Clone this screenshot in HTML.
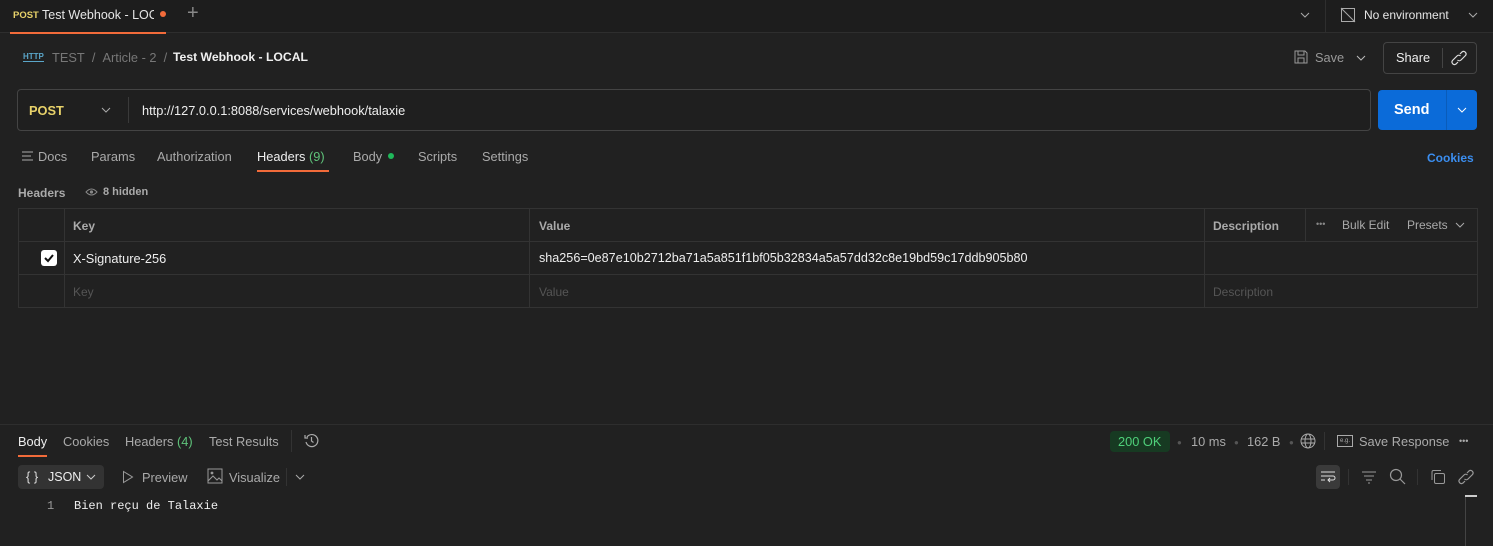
<!DOCTYPE html>
<html><head><style>
*{margin:0;padding:0;box-sizing:border-box}
body{width:1493px;height:546px;background:#212121;font-family:"Liberation Sans",sans-serif;font-size:12.8px;color:#c8c8c8;position:relative;overflow:hidden}
.a{position:absolute;white-space:nowrap}
.b{font-weight:bold}
svg{position:absolute}
</style></head><body>
<div class="a" style="left:0;top:0;width:1493px;height:33px;background:#1d1d1d;border-bottom:1px solid #2e2e2e"></div>
<div class="a" style="left:10px;top:32px;width:156px;height:2px;background:#f26b3a"></div>
<div class="a b" style="left:13px;top:10px;font-size:9.5px;color:#e8d26a">POST</div>
<div class="a" style="left:42px;top:8px;color:#e6e6e6;font-size:12.5px;width:112px;overflow:hidden">Test Webhook - LOCAL</div>
<div class="a" style="left:160px;top:11px;width:6px;height:6px;border-radius:3px;background:#f26b3a"></div>
<div class="a" style="left:187px;top:2px;font-size:20px;color:#888">+</div>
<svg style="left:1299px;top:10px" width="12" height="10"><path d="M2 3l4 4 4-4" stroke="#aaa" fill="none"/></svg>
<div class="a" style="left:1325px;top:0;width:1px;height:33px;background:#2e2e2e"></div>
<svg style="left:1340px;top:7px" width="16" height="16"><rect x="1.5" y="1.5" width="13" height="13" fill="none" stroke="#aaa"/><path d="M1 1l14 14" stroke="#aaa"/></svg>
<div class="a" style="left:1364px;top:8px;color:#e6e6e6;font-size:12px">No environment</div>
<svg style="left:1467px;top:10px" width="12" height="10"><path d="M2 3l4 4 4-4" stroke="#aaa" fill="none"/></svg>
<div class="a b" style="left:23px;top:52px;font-size:8px;color:#5aa6c9;border-bottom:1px solid #5aa6c9">HTTP</div>
<div class="a" style="left:52px;top:50px;color:#777">TEST&nbsp; / &nbsp;Article - 2&nbsp; / </div>
<div class="a b" style="left:173px;top:50px;color:#f0f0f0;font-size:12.2px">Test Webhook - LOCAL</div>
<svg style="left:1293px;top:49px" width="16" height="16"><path d="M2 2h10l2 2v10H2z M5 2v4h6V2 M5 14v-5h6v5" fill="none" stroke="#999"/></svg>
<div class="a" style="left:1315px;top:50px;color:#999">Save</div>
<svg style="left:1355px;top:53px" width="12" height="10"><path d="M2 3l4 4 4-4" stroke="#bbb" fill="none"/></svg>
<div class="a" style="left:1383px;top:42px;width:94px;height:32px;border:1px solid #444;border-radius:4px"></div>
<div class="a" style="left:1396px;top:50px;color:#eee">Share</div>
<div class="a" style="left:1442px;top:48px;width:1px;height:20px;background:#444"></div>
<svg style="left:1451px;top:50px" width="16" height="16"><path d="M9 4l2-2a2.5 2.5 0 013.5 3.5L10 10a2.5 2.5 0 01-3.5 0M7 12l-2 2a2.5 2.5 0 01-3.5-3.5L6 6a2.5 2.5 0 013.5 0" fill="none" stroke="#ddd" stroke-width="1.2"/></svg>
<div class="a" style="left:17px;top:89px;width:1354px;height:42px;border:1px solid #444;border-radius:4px;background:#1f1f1f"></div>
<div class="a b" style="left:29px;top:103px;color:#e8d26a">POST</div>
<svg style="left:100px;top:105px" width="12" height="10"><path d="M2 3l4 4 4-4" stroke="#aaa" fill="none"/></svg>
<div class="a" style="left:128px;top:97px;width:1px;height:26px;background:#3a3a3a"></div>
<div class="a" style="left:142px;top:103px;color:#eee">http://127.0.0.1:8088/services/webhook/talaxie</div>
<div class="a" style="left:1378px;top:90px;width:99px;height:40px;background:#0b6bd9;border-radius:4px"></div>
<div class="a" style="left:1446px;top:90px;width:1px;height:40px;background:#0a5cba"></div>
<div class="a b" style="left:1394px;top:102px;color:#fff;font-size:14.5px">Send</div>
<svg style="left:1456px;top:105px" width="12" height="10"><path d="M2 3l4 4 4-4" stroke="#fff" fill="none"/></svg>
<svg style="left:22px;top:150px" width="12" height="12"><path d="M0 2h11M0 6h9M0 10h11" stroke="#aaa"/></svg>
<div class="a" style="left:38px;top:149px;color:#aaa">Docs</div>
<div class="a" style="left:91px;top:149px;color:#aaa">Params</div>
<div class="a" style="left:157px;top:149px;color:#aaa">Authorization</div>
<div class="a" style="left:257px;top:149px;color:#eee">Headers <span style="color:#5fc37a">(9)</span></div>
<div class="a" style="left:257px;top:170px;width:72px;height:2px;background:#f26b3a"></div>
<div class="a" style="left:353px;top:149px;color:#aaa">Body</div>
<div class="a" style="left:388px;top:153px;width:6px;height:6px;border-radius:3px;background:#1fb85a"></div>
<div class="a" style="left:418px;top:149px;color:#aaa">Scripts</div>
<div class="a" style="left:482px;top:149px;color:#aaa">Settings</div>
<div class="a b" style="left:1427px;top:151px;color:#3b8ef0;font-size:12px">Cookies</div>
<div class="a b" style="left:18px;top:186px;color:#aaa;font-size:12px">Headers</div>
<svg style="left:85px;top:187px" width="13" height="10"><path d="M1 5q5.5-6 11 0q-5.5 6-11 0z" fill="none" stroke="#888"/><circle cx="6.5" cy="5" r="1.6" fill="#888"/></svg>
<div class="a b" style="left:103px;top:186px;color:#aaa;font-size:11px">8 hidden</div>
<div class="a" style="left:18px;top:208px;width:1460px;height:100px;border:1px solid #333"></div>
<div class="a" style="left:18px;top:241px;width:1460px;height:1px;background:#333"></div>
<div class="a" style="left:18px;top:274px;width:1460px;height:1px;background:#333"></div>
<div class="a" style="left:64px;top:208px;width:1px;height:100px;background:#333"></div>
<div class="a" style="left:529px;top:208px;width:1px;height:100px;background:#333"></div>
<div class="a" style="left:1204px;top:208px;width:1px;height:100px;background:#333"></div>
<div class="a" style="left:1305px;top:208px;width:1px;height:34px;background:#333"></div>
<div class="a b" style="left:73px;top:219px;color:#aaa;font-size:12px">Key</div>
<div class="a b" style="left:539px;top:219px;color:#aaa;font-size:12px">Value</div>
<div class="a b" style="left:1213px;top:219px;color:#aaa;font-size:12px">Description</div>
<div class="a" style="left:1316px;top:219px;color:#888;font-size:9px">•••</div>
<div class="a" style="left:1342px;top:218px;color:#aaa;font-size:12px">Bulk Edit</div>
<div class="a" style="left:1407px;top:218px;color:#aaa;font-size:12px">Presets</div>
<svg style="left:1454px;top:220px" width="12" height="10"><path d="M2 3l4 4 4-4" stroke="#aaa" fill="none"/></svg>
<div class="a" style="left:41px;top:250px;width:16px;height:16px;background:#fff;border-radius:3px"></div>
<svg style="left:41px;top:250px" width="16" height="16"><path d="M4 8l3 3 5-6" stroke="#111" stroke-width="2" fill="none"/></svg>
<div class="a" style="left:73px;top:251px;color:#eee">X-Signature-256</div>
<div class="a" style="left:539px;top:251px;color:#eee;font-size:12.6px">sha256=0e87e10b2712ba71a5a851f1bf05b32834a5a57dd32c8e19bd59c17ddb905b80</div>
<div class="a" style="left:73px;top:285px;color:#555;font-size:12px">Key</div>
<div class="a" style="left:539px;top:285px;color:#555;font-size:12px">Value</div>
<div class="a" style="left:1213px;top:285px;color:#555;font-size:12px">Description</div>
<div class="a" style="left:0;top:424px;width:1493px;height:1px;background:#2e2e2e"></div>
<div class="a" style="left:18px;top:434px;color:#eee">Body</div>
<div class="a" style="left:18px;top:455px;width:29px;height:2px;background:#f26b3a"></div>
<div class="a" style="left:63px;top:434px;color:#aaa">Cookies</div>
<div class="a" style="left:125px;top:434px;color:#aaa">Headers <span style="color:#5fc37a">(4)</span></div>
<div class="a" style="left:209px;top:434px;color:#aaa">Test Results</div>
<div class="a" style="left:291px;top:430px;width:1px;height:22px;background:#333"></div>
<svg style="left:304px;top:433px" width="15" height="15"><path d="M3 4a6 6 0 11-1 5" fill="none" stroke="#aaa" stroke-width="1.2"/><path d="M1 2v3h3M7.5 4v4l2 1.5" fill="none" stroke="#aaa" stroke-width="1.2"/></svg>
<div class="a" style="left:1110px;top:431px;width:60px;height:21px;background:#173a22;border-radius:4px"></div>
<div class="a" style="left:1118px;top:434px;color:#4fd07a">200 OK</div>
<div class="a" style="left:1177px;top:438px;color:#555;font-size:8px">●</div>
<div class="a" style="left:1191px;top:434px;color:#aaa">10 ms</div>
<div class="a" style="left:1234px;top:438px;color:#555;font-size:8px">●</div>
<div class="a" style="left:1247px;top:434px;color:#aaa">162 B</div>
<div class="a" style="left:1289px;top:438px;color:#555;font-size:8px">●</div>
<svg style="left:1300px;top:433px" width="16" height="16"><circle cx="8" cy="8" r="7" fill="none" stroke="#aaa"/><ellipse cx="8" cy="8" rx="3" ry="7" fill="none" stroke="#aaa"/><path d="M1 6h14M1 10h14" stroke="#aaa"/></svg>
<div class="a" style="left:1324px;top:432px;width:1px;height:18px;background:#333"></div>
<div class="a" style="left:1337px;top:435px;width:16px;height:12px;border:1px solid #aaa;font-size:6px;color:#aaa;text-align:center;line-height:10px">e.g.</div>
<div class="a" style="left:1359px;top:434px;color:#aaa">Save Response</div>
<div class="a" style="left:1459px;top:436px;color:#aaa;font-size:9px">•••</div>
<div class="a" style="left:18px;top:465px;width:86px;height:24px;background:#333;border-radius:4px"></div>
<div class="a" style="left:26px;top:469px;color:#ddd">{ }</div>
<div class="a" style="left:48px;top:470px;color:#eee;font-size:12.5px">JSON</div>
<svg style="left:86px;top:472px" width="10" height="10"><path d="M1 3l4 4 4-4" stroke="#ccc" fill="none"/></svg>
<svg style="left:122px;top:470px" width="12" height="14"><path d="M1.5 1.5l9 5.5-9 5.5z" fill="none" stroke="#999"/></svg>
<div class="a" style="left:142px;top:470px;color:#aaa">Preview</div>
<svg style="left:207px;top:468px" width="16" height="16"><rect x="1" y="1" width="14" height="14" fill="none" stroke="#999"/><circle cx="5" cy="5" r="1.4" fill="#999"/><path d="M1 13l5-5 4 4 2-2 3 3" fill="none" stroke="#999"/></svg>
<div class="a" style="left:229px;top:470px;color:#aaa">Visualize</div>
<div class="a" style="left:286px;top:468px;width:1px;height:18px;background:#333"></div>
<svg style="left:294px;top:472px" width="12" height="10"><path d="M2 3l4 4 4-4" stroke="#aaa" fill="none"/></svg>
<div class="a" style="left:1316px;top:465px;width:24px;height:24px;background:#3a3a3a;border-radius:4px"></div>
<svg style="left:1320px;top:469px" width="16" height="16"><path d="M1 3h14M1 7h12a2 2 0 010 4H8M10 9l-2 2 2 2M1 11h4" fill="none" stroke="#ddd"/></svg>
<div class="a" style="left:1348px;top:469px;width:1px;height:16px;background:#333"></div>
<svg style="left:1361px;top:470px" width="16" height="14"><path d="M1 2h14M3 6h10M5 10h6M7 13h2" stroke="#999"/></svg>
<svg style="left:1389px;top:468px" width="17" height="17"><circle cx="7" cy="7" r="5.5" fill="none" stroke="#999" stroke-width="1.2"/><path d="M11 11l5 5" stroke="#999" stroke-width="1.2"/></svg>
<div class="a" style="left:1417px;top:469px;width:1px;height:16px;background:#333"></div>
<svg style="left:1430px;top:469px" width="16" height="16"><rect x="4.5" y="4.5" width="10" height="10" rx="1.5" fill="none" stroke="#999"/><path d="M2 11V3a1.5 1.5 0 011.5-1.5H11" fill="none" stroke="#999"/></svg>
<svg style="left:1458px;top:469px" width="16" height="16"><path d="M9 4l2-2a2.5 2.5 0 013.5 3.5L10 10a2.5 2.5 0 01-3.5 0M7 12l-2 2a2.5 2.5 0 01-3.5-3.5L6 6a2.5 2.5 0 013.5 0" fill="none" stroke="#999" stroke-width="1.2"/></svg>
<div class="a" style="left:47px;top:499px;color:#999;font-family:'Liberation Mono',monospace;font-size:12px">1</div>
<div class="a" style="left:74px;top:499px;color:#eee;font-family:'Liberation Mono',monospace;font-size:12px">Bien reçu de Talaxie</div>
<div class="a" style="left:1465px;top:495px;width:12px;height:2px;background:#ccc"></div>
<div class="a" style="left:1465px;top:497px;width:1px;height:49px;background:#444"></div>
</body></html>
